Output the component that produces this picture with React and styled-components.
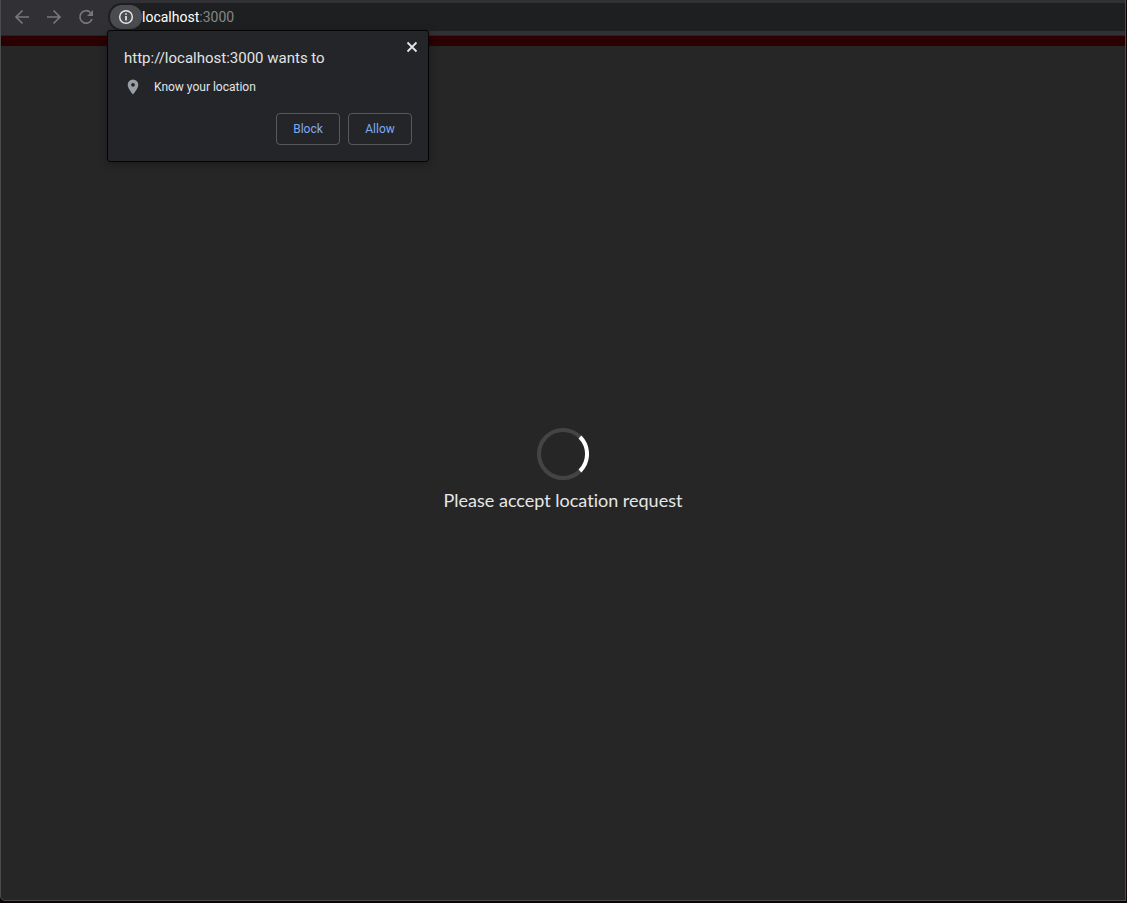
import React from "react";
import styled, { createGlobalStyle } from "styled-components";

const GlobalStyle = createGlobalStyle`
  *, *::before, *::after { box-sizing: border-box; }
  body { margin: 0; background: #0b0304; }
  button { font: inherit; }
`;

const sans = `Roboto, "Liberation Sans", sans-serif`;

const Window = styled.div`
  display: flex;
  flex-direction: column;
  min-height: 100vh;
  padding: 0 1px 2px 0;
  font-family: ${sans};
`;

const Frame = styled.div`
  flex: 1;
  display: flex;
  flex-direction: column;
  border: 1px solid #4b4b4b;
  border-top: 0;
  border-radius: 0 0 0 5px;
  background: #262626;
  overflow: hidden;
`;

const Toolbar = styled.header`
  position: relative;
  display: flex;
  align-items: center;
  height: 36px;
  padding: 3px 0 5px 5px;
  background: #303035;
  border-bottom: 1px solid #252528;
`;

const NavButton = styled.button`
  display: grid;
  place-items: center;
  width: 32px;
  height: 28px;
  padding: 0;
  border: 0;
  background: none;
  color: #77787b;
`;

const AddressBar = styled.div`
  flex: 1;
  display: flex;
  align-items: center;
  height: 28px;
  margin-left: 6px;
  padding-left: 2px;
  border-radius: 14px 0 0 14px;
  background: #1e1f21;
`;

const SiteInfo = styled.button`
  display: grid;
  place-items: center;
  width: 32px;
  height: 24px;
  padding: 0;
  border: 0;
  border-radius: 12px;
  background: #4b4c50;
  color: #e4e5e7;
`;

const Url = styled.span`
  font-size: 14px;
  line-height: 20px;
  color: #85878a;
`;

const Host = styled.span`
  color: #ffffff;
`;

const Dialog = styled.section`
  position: absolute;
  z-index: 1;
  top: 30px;
  left: 106px;
  width: 322px;
  padding: 16px;
  border: 1px solid #050505;
  border-radius: 3px;
  background: #242529;
  box-shadow: 0 2px 8px rgba(0, 0, 0, 0.3);
  color: #e2e3e5;
`;

const Title = styled.h1`
  margin: 0;
  font-size: 15px;
  font-weight: 400;
  line-height: 22px;
`;

const Permission = styled.p`
  display: flex;
  align-items: center;
  gap: 13px;
  margin: 8px 0 16px;
  font-size: 12px;
  line-height: 20px;
`;

const Actions = styled.div`
  display: flex;
  justify-content: flex-end;
  gap: 8px;
`;

const ActionButton = styled.button`
  width: 64px;
  height: 32px;
  padding: 0;
  border: 1px solid #57595d;
  border-radius: 4px;
  background: none;
  color: #80aaf0;
  font-size: 12px;
`;

const CloseButton = styled.button`
  position: absolute;
  top: 8px;
  right: 8px;
  display: grid;
  place-items: center;
  width: 16px;
  height: 16px;
  padding: 0;
  border: 0;
  background: none;
  color: #e4e5e7;
`;

const Banner = styled.div`
  height: 10px;
  background: #2b0003;
`;

const Content = styled.main`
  flex: 1;
  display: flex;
  flex-direction: column;
  align-items: center;
  justify-content: center;
  gap: 8px;
  padding-bottom: 6px;
`;

const Message = styled.p`
  margin: 0;
  color: #e6e6e6;
  font-family: Lato, sans-serif;
  font-size: 18px;
  font-variant-ligatures: none;
  line-height: 24px;
`;

const BackIcon = () => (
  <svg width="16" height="16" viewBox="0 0 16 16" fill="none" stroke="currentColor" strokeWidth="1.7">
    <path d="M15 8H2M8.5 1.5 2 8l6.5 6.5" />
  </svg>
);

const ForwardIcon = () => (
  <svg width="16" height="16" viewBox="0 0 16 16" fill="none" stroke="currentColor" strokeWidth="1.7">
    <path d="M1 8h13M7.5 1.5 14 8l-6.5 6.5" />
  </svg>
);

const ReloadIcon = () => (
  <svg width="16" height="16" viewBox="0 0 16 16" fill="none">
    <path d="M12.5 3.5A6.2 6.2 0 1 0 14 10" stroke="currentColor" strokeWidth="1.7" />
    <path d="M15 1v6H9Z" fill="currentColor" />
  </svg>
);

const InfoIcon = () => (
  <svg width="16" height="16" viewBox="0 0 16 16" fill="none" stroke="currentColor" strokeWidth="1.5">
    <circle cx="8" cy="8" r="6.3" />
    <path d="M8 7v4.5M8 4.2v1.6" strokeWidth="1.7" />
  </svg>
);

const PinIcon = () => (
  <svg width="17" height="18" viewBox="0 0 17 18">
    <path
      fill="#9a9fa5"
      fillRule="evenodd"
      d="M9 1.5A5.3 5.3 0 0 0 3.7 6.8C3.7 10.8 9 16.5 9 16.5s5.3-5.7 5.3-9.7A5.3 5.3 0 0 0 9 1.5Zm0 3.4a1.9 1.9 0 1 1 0 3.8 1.9 1.9 0 0 1 0-3.8Z"
    />
  </svg>
);

const CloseIcon = () => (
  <svg width="12" height="12" viewBox="0 0 12 12" stroke="currentColor" strokeWidth="1.8">
    <path d="m1.5 1.5 9 9m0-9-9 9" />
  </svg>
);

const Spinner = () => (
  <svg width="52" height="52" viewBox="0 0 52 52" fill="none" strokeWidth="4" role="img" aria-label="Loading">
    <circle cx="26" cy="26" r="24" stroke="#444444" />
    <path d="M43 9a24 24 0 0 1 0 34" stroke="#ffffff" />
  </svg>
);

export default function App() {
  return (
    <Window>
      <GlobalStyle />
      <Frame>
        <Toolbar>
          <NavButton aria-label="Back"><BackIcon /></NavButton>
          <NavButton aria-label="Forward"><ForwardIcon /></NavButton>
          <NavButton aria-label="Reload"><ReloadIcon /></NavButton>
          <AddressBar>
            <SiteInfo aria-label="Site information"><InfoIcon /></SiteInfo>
            <Url><Host>localhost</Host>:3000</Url>
          </AddressBar>
          <Dialog role="dialog" aria-labelledby="permission-title">
            <Title id="permission-title">http://localhost:3000 wants to</Title>
            <Permission><PinIcon />Know your location</Permission>
            <Actions>
              <ActionButton>Block</ActionButton>
              <ActionButton>Allow</ActionButton>
            </Actions>
            <CloseButton aria-label="Close"><CloseIcon /></CloseButton>
          </Dialog>
        </Toolbar>
        <Banner />
        <Content>
          <Spinner />
          <Message>Please accept location request</Message>
        </Content>
      </Frame>
    </Window>
  );
}
